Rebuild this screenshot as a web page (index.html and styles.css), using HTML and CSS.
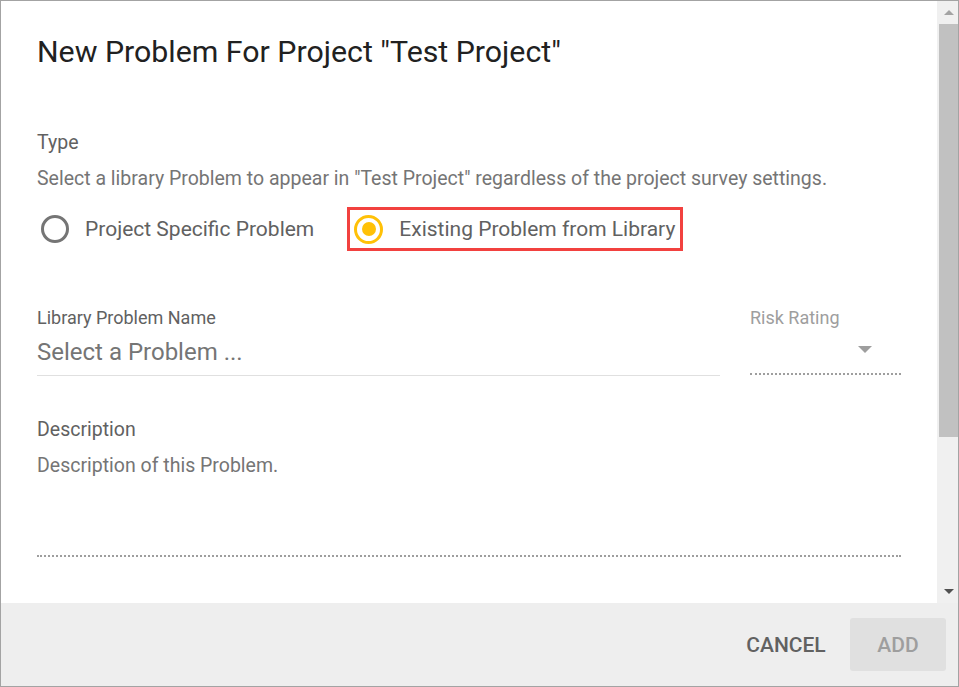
FILE: index.html
```html
<!DOCTYPE html>
<html>
<head>
<meta charset="utf-8">
<link rel="stylesheet" href="styles.css">
</head>
<body>
<div class="window">
  <div class="main">
    <div class="content">
      <h1 class="title">New Problem For Project "Test Project"</h1>
      <div class="type-label">Type</div>
      <div class="hint">Select a library Problem to appear in "Test Project" regardless of the project survey settings.</div>
      <div class="radios">
        <div class="radio">
          <span class="circle"></span>
          <span class="radio-text">Project Specific Problem</span>
        </div>
        <div class="radio selected">
          <span class="circle"><span class="dot"></span></span>
          <span class="radio-text">Existing Problem from Library</span>
        </div>
      </div>
      <div class="fields">
        <div class="field name">
          <div class="field-label">Library Problem Name</div>
          <div class="field-value">Select a Problem ...</div>
        </div>
        <div class="field risk">
          <div class="field-label">Risk Rating</div>
          <div class="select"><span class="caret"></span></div>
        </div>
      </div>
      <div class="desc">
        <div class="desc-label">Description</div>
        <div class="desc-text">Description of this Problem.</div>
      </div>
    </div>
    <div class="scrollbar">
      <div class="sb-btn"><span class="arrow-up"></span></div>
      <div class="sb-track"><div class="sb-thumb"></div></div>
      <div class="sb-btn"><span class="arrow-down"></span></div>
    </div>
  </div>
  <div class="footer">
    <button class="btn cancel">CANCEL</button>
    <button class="btn add">ADD</button>
  </div>
</div>
</body>
</html>
```
FILE: styles.css
```css
* { box-sizing: border-box; }
html, body { margin: 0; padding: 0; }
body {
  font-family: Roboto, "Liberation Sans", sans-serif;
  background: #fff;
}
.window {
  width: 959px;
  height: 687px;
  border: 1px solid #a3a3a3;
  display: flex;
  flex-direction: column;
}
.main {
  height: 602px;
  display: flex;
}
.content {
  flex: 1;
  padding: 0 36px 0 36px;
  overflow: hidden;
}
.title {
  margin: 33px 0 0 0;
  font-size: 30.3px;
  font-weight: 400;
  color: #212121;
  line-height: 36px;
}
.type-label {
  margin-top: 61px;
  font-size: 19.5px;
  color: #616161;
  line-height: 24px;
}
.hint {
  margin-top: 12px;
  font-size: 19.5px;
  color: #757575;
  line-height: 24px;
}
.radios {
  display: flex;
  align-items: center;
  margin-top: 16px;
}
.radio {
  display: flex;
  align-items: center;
  height: 44px;
  padding-left: 4px;
}
.radio.selected {
  border: 3px solid #f2413f;
  margin-left: 33px;
  padding: 0 5px 0 4px;
}
.circle {
  width: 28px;
  height: 28px;
  border-radius: 50%;
  border: 3px solid #757575;
  display: flex;
  align-items: center;
  justify-content: center;
}
.selected .circle {
  width: 29px;
  height: 29px;
  border: 3px solid #ffc107;
}
.dot {
  width: 14px;
  height: 14px;
  border-radius: 50%;
  background: #ffc107;
}
.radio-text {
  margin-left: 16px;
  font-size: 21px;
  color: #616161;
}
.selected .radio-text {
  margin-left: 16px;
}
.fields {
  display: flex;
  margin-top: 56px;
}
.field.name {
  width: 683px;
}
.field.risk {
  margin-left: 30px;
  flex: 1;
}
.field-label {
  font-size: 18px;
  color: #616161;
  line-height: 22px;
}
.risk .field-label {
  color: #9e9e9e;
}
.field-value {
  margin-top: 8px;
  font-size: 24px;
  color: #757575;
  line-height: 30px;
  padding-bottom: 8px;
  border-bottom: 1px solid #e0e0e0;
}
.select {
  margin-top: 8px;
  height: 38px;
  border-bottom: 2px dotted #9e9e9e;
  display: flex;
  justify-content: flex-end;
  align-items: center;
  padding-right: 29px;
  padding-bottom: 12px;
}
.caret {
  width: 0;
  height: 0;
  border-left: 7px solid transparent;
  border-right: 7px solid transparent;
  border-top: 7px solid #9e9e9e;
}
.desc {
  margin-top: 42px;
  border-bottom: 2px dotted #9e9e9e;
  height: 139px;
}
.desc-label {
  font-size: 19.5px;
  line-height: 24px;
  color: #616161;
}
.desc-text {
  margin-top: 12px;
  font-size: 19.5px;
  color: #757575;
  line-height: 24px;
}
.scrollbar {
  width: 21px;
  background: #f0f0f0;
  display: flex;
  flex-direction: column;
}
.sb-btn {
  height: 23px;
  display: flex;
  align-items: center;
  justify-content: center;
  padding-left: 2px;
}
.arrow-up {
  width: 0; height: 0;
  border-left: 5px solid transparent;
  border-right: 5px solid transparent;
  border-bottom: 5px solid #a3a3a3;
}
.arrow-down {
  width: 0; height: 0;
  border-left: 5px solid transparent;
  border-right: 5px solid transparent;
  border-top: 5px solid #505050;
}
.sb-track {
  flex: 1;
  padding-left: 2px;
}
.sb-thumb {
  height: 413px;
  background: #c1c1c1;
}
.footer {
  flex: 1;
  background: #eeeeee;
  display: flex;
  justify-content: flex-end;
  align-items: flex-start;
  padding: 15px 12px 0 0;
}
.btn {
  font-family: Roboto, "Liberation Sans", sans-serif;
  font-size: 21px;
  font-weight: 500;
  border: none;
  background: transparent;
  height: 53px;
  border-radius: 3px;
  padding: 0;
}
.cancel {
  color: #616161;
  width: 96px;
  margin-right: 16px;
}
.add {
  background: #e0e0e0;
  color: #9e9e9e;
  width: 96px;
}
```
